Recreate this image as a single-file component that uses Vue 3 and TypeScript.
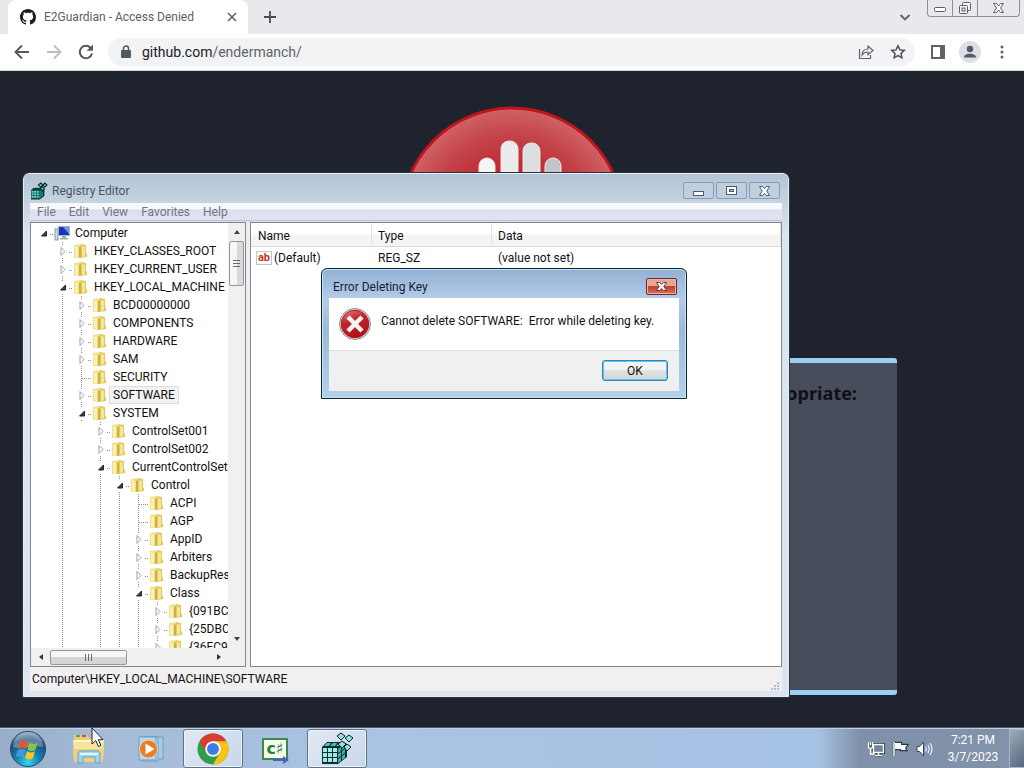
<script setup lang="ts">
import { ref } from 'vue'

interface TreeRow {
  name: string
  depth: number
  state: 'open' | 'closed' | 'leaf'
  selected?: boolean
}

const rows: TreeRow[] = [
  { name: 'Computer', depth: 0, state: 'open' },
  { name: 'HKEY_CLASSES_ROOT', depth: 1, state: 'closed' },
  { name: 'HKEY_CURRENT_USER', depth: 1, state: 'closed' },
  { name: 'HKEY_LOCAL_MACHINE', depth: 1, state: 'open' },
  { name: 'BCD00000000', depth: 2, state: 'closed' },
  { name: 'COMPONENTS', depth: 2, state: 'closed' },
  { name: 'HARDWARE', depth: 2, state: 'closed' },
  { name: 'SAM', depth: 2, state: 'closed' },
  { name: 'SECURITY', depth: 2, state: 'leaf' },
  { name: 'SOFTWARE', depth: 2, state: 'closed', selected: true },
  { name: 'SYSTEM', depth: 2, state: 'open' },
  { name: 'ControlSet001', depth: 3, state: 'closed' },
  { name: 'ControlSet002', depth: 3, state: 'closed' },
  { name: 'CurrentControlSet', depth: 3, state: 'open' },
  { name: 'Control', depth: 4, state: 'open' },
  { name: 'ACPI', depth: 5, state: 'leaf' },
  { name: 'AGP', depth: 5, state: 'leaf' },
  { name: 'AppID', depth: 5, state: 'closed' },
  { name: 'Arbiters', depth: 5, state: 'closed' },
  { name: 'BackupRestore', depth: 5, state: 'closed' },
  { name: 'Class', depth: 5, state: 'open' },
  { name: '{091BC97D', depth: 6, state: 'closed' },
  { name: '{25DBCE51', depth: 6, state: 'closed' },
  { name: '{36FC9E60', depth: 6, state: 'closed' },
]

// Levels whose vertical connector continues past their open child.
const continued = new Set([1, 3, 4, 5])

// Cells of the isometric cube in the Registry Editor icon: front face, then side face.
const front = [0, 1, 2].flatMap((r) => [0, 1, 2].map((c) => ({ x: 3 + c * 5, y: 17 + r * 5 })))
const side = [0, 1].flatMap((c) => [0, 1, 2].map((r) => `M${18 + c * 4} ${18 - c * 3 + r * 5}l3-2v4l-3 2z`))

const menus = ['File', 'Edit', 'View', 'Favorites', 'Help']
const address = ref('github.com/endermanch/')
</script>

<template>
  <div class="desktop">
    <header class="tabstrip">
      <div class="tab">
        <svg class="octo" viewBox="0 0 16 16" aria-hidden="true">
          <path fill="#1b1f23" d="M8 0C3.58 0 0 3.58 0 8c0 3.54 2.29 6.53 5.47 7.59.4.07.55-.17.55-.38 0-.19-.01-.82-.01-1.49-2.01.37-2.53-.49-2.69-.94-.09-.23-.48-.94-.82-1.13-.28-.15-.68-.52-.01-.53.63-.01 1.08.58 1.23.82.72 1.21 1.87.87 2.33.66.07-.52.28-.87.51-1.07-1.78-.2-3.64-.89-3.64-3.95 0-.87.31-1.59.82-2.15-.08-.2-.36-1.02.08-2.12 0 0 .67-.21 2.2.82.64-.18 1.32-.27 2-.27s1.36.09 2 .27c1.53-1.04 2.2-.82 2.2-.82.44 1.1.16 1.92.08 2.12.51.56.82 1.27.82 2.15 0 3.07-1.87 3.75-3.65 3.95.29.25.54.73.54 1.48 0 1.07-.01 1.93-.01 2.2 0 .21.15.46.55.38A8.01 8.01 0 0 0 16 8c0-4.42-3.58-8-8-8z" />
        </svg>
        <span class="tab-title">E2Guardian - Access Denied</span>
        <button class="plain" aria-label="Close tab">
          <svg width="16" height="16" viewBox="0 0 16 16"><path d="M4 4l8 8M12 4l-8 8" stroke="#5f6368" stroke-width="1.6" /></svg>
        </button>
      </div>
      <button class="plain new-tab" aria-label="New tab">
        <svg width="16" height="16" viewBox="0 0 16 16"><path d="M8 2v12M2 8h12" stroke="#4a4e53" stroke-width="1.8" /></svg>
      </button>
      <button class="plain tab-search" aria-label="Search tabs">
        <svg width="16" height="16" viewBox="0 0 16 16"><path d="M3.500 6l4.500 4.500L12.500 6" stroke="#5f6368" stroke-width="1.800" fill="none" /></svg>
      </button>
      <div class="caption">
        <button aria-label="Minimize"><svg width="14" height="10" viewBox="0 0 14 10"><rect x="1.500" y="4.500" width="11" height="4" rx="1" fill="#fff" stroke="#5b5f6b" /></svg></button>
        <button aria-label="Restore"><svg width="14" height="14" viewBox="0 0 14 14"><g fill="#f4f4f6" stroke="#5b5f6b"><rect x="4.500" y="1.500" width="8" height="8" rx="1" /><rect x="1.500" y="4.500" width="8" height="8" rx="1" /><rect x="4" y="7" width="3" height="3" /></g></svg></button>
        <button class="wide" aria-label="Close"><svg width="13" height="12" viewBox="0 0 13 12"><path d="M1.500 1.500h3l2 2.500 2-2.500h3L8.500 6l3 4.500h-3l-2-2.500-2 2.500h-3l3-4.500z" fill="#fff" stroke="#5b5f6b" /></svg></button>
      </div>
    </header>

    <nav class="toolbar">
      <button class="plain" aria-label="Back"><svg width="20" height="20" viewBox="0 0 20 20"><path d="M17 10H4M10 3.500L3.500 10l6.500 6.500" fill="none" stroke="#55595e" stroke-width="1.900" /></svg></button>
      <button class="plain" aria-label="Forward"><svg width="20" height="20" viewBox="0 0 20 20"><path d="M3 10h13M10 3.500l6.500 6.500-6.500 6.500" fill="none" stroke="#bbbec2" stroke-width="1.900" /></svg></button>
      <button class="plain" aria-label="Reload"><svg width="20" height="20" viewBox="0 0 20 20"><path d="M16 11.500A6.200 6.200 0 1 1 14.500 5.700L16 7.200" fill="none" stroke="#55595e" stroke-width="2" /><path d="M17 2.500v6.300h-6.300z" fill="#55595e" /></svg></button>
      <div class="omnibox">
        <svg width="12" height="14" viewBox="0 0 12 14" aria-hidden="true"><rect x="1" y="5" width="10" height="8" rx="1" fill="#55595e" /><path d="M3.500 6V3.500a2.500 2.500 0 0 1 5 0V6" fill="none" stroke="#55595e" stroke-width="1.500" /></svg>
        <div class="url">
          <input v-model="address" aria-label="Address" />
          <span class="url-view" aria-hidden="true"><b>github.com</b>/endermanch/</span>
        </div>
        <button class="plain" aria-label="Share"><svg width="18" height="18" viewBox="0 0 18 18"><path d="M2.500 6v9.500h11V12M5 12c.3-4 2.500-6 6-6V3l5 4.500-5 4.300V9c-2.700 0-4.500.8-6 3z" fill="none" stroke="#5f6368" stroke-width="1.200" /></svg></button>
        <button class="plain" aria-label="Bookmark"><svg width="16" height="16" viewBox="0 0 16 16"><path d="M8 1.800l1.900 4.100 4.400.5-3.300 3 .9 4.400L8 11.600l-3.900 2.200.9-4.400-3.300-3 4.400-.5z" fill="none" stroke="#4d5156" stroke-width="1.500" /></svg></button>
      </div>
      <button class="plain side" aria-label="Side panel"><svg width="16" height="16" viewBox="0 0 16 16"><rect x="2" y="2" width="12" height="12" fill="#fff" stroke="#5f6368" stroke-width="2" /><rect x="10" y="1" width="5" height="14" fill="#5f6368" /></svg></button>
      <button class="plain avatar" aria-label="Profile"><svg width="22" height="22" viewBox="0 0 22 22"><circle cx="11" cy="11" r="11" fill="#dcdfe4" /><circle cx="11" cy="8" r="3.200" fill="#505968" /><path d="M5 16.500c0-5 12-5 12 0z" fill="#505968" /></svg></button>
      <button class="plain dots" aria-label="Menu"><svg width="16" height="16" viewBox="0 0 16 16" fill="#5f6368"><circle cx="8" cy="3" r="1.500" /><circle cx="8" cy="8" r="1.500" /><circle cx="8" cy="13" r="1.500" /></svg></button>
    </nav>

    <main class="page">
      <svg class="stop" viewBox="0 0 226 226" aria-hidden="true">
        <defs>
          <radialGradient id="red" cx=".5" cy=".5" r=".5"><stop offset="0" stop-color="#b8202a" /><stop offset=".5" stop-color="#be2d36" /><stop offset=".75" stop-color="#c4434a" /><stop offset="1" stop-color="#cf6266" /></radialGradient>
        </defs>
        <circle cx="113" cy="113" r="111" fill="url(#red)" stroke="#bd141d" stroke-width="3" />
        <g stroke="#f4e4e2" stroke-width="1">
          <rect x="80" y="52" width="16" height="90" rx="8" fill="#f5f5f5" />
          <rect x="102" y="35" width="17" height="100" rx="8" fill="#ebebec" />
          <rect x="124" y="37" width="17" height="100" rx="8" fill="#dcdfe1" />
          <rect x="146" y="52" width="16" height="90" rx="8" fill="#c3c6c8" />
        </g>
      </svg>
      <section class="notice"><p>appropriate:</p></section>
    </main>

    <section class="window" aria-label="Registry Editor">
      <div class="titlebar">
        <svg width="18" height="18" viewBox="0 0 35 35" aria-hidden="true">
          <path d="M2 16l5-5h17l4 2v14l-9 7H2z" fill="#0d3a3a" />
          <path v-for="p in front" :key="`${p.x}-${p.y}`" :d="`M${p.x} ${p.y}h4v4h-4z`" fill="#5fd6cb" />
          <path v-for="p in side" :key="p" :d="p" fill="#2f9a93" />
          <path d="M16 6l5-4 4 4-4 4zM25 6l4-4 4 4-4 4zM20 13l4-4 4 4-4 4z" fill="#5fd6cb" stroke="#072222" stroke-width="2" />
        </svg>
        <h1>Registry Editor</h1>
        <div class="controls">
          <button aria-label="Minimize window"><svg width="12" height="12" viewBox="0 0 12 12"><rect x=".5" y="6.500" width="10" height="4" fill="#fff" stroke="#4c5a72" /></svg></button>
          <button aria-label="Maximize window"><svg width="12" height="12" viewBox="0 0 12 12"><rect x=".5" y="1.500" width="10" height="8" fill="#fff" stroke="#4c5a72" /><rect x="3.500" y="4.500" width="4" height="2" fill="#b7c6d8" stroke="#4c5a72" /></svg></button>
          <button aria-label="Close window"><svg width="13" height="12" viewBox="0 0 13 12"><path d="M1.500 1.500h3l2 2 2-2h3L8.800 6l2.700 4.500h-3l-2-2-2 2h-3L4.200 6z" fill="#fff" stroke="#4c5a72" /></svg></button>
        </div>
      </div>
      <div class="menubar"><button v-for="m in menus" :key="m">{{ m }}</button></div>

      <div class="panes">
        <div class="tree-pane">
          <ul class="tree" role="tree">
            <li v-for="row in rows" :key="row.name" role="treeitem" :aria-level="row.depth + 1" :aria-selected="!!row.selected">
              <i v-for="d in row.depth" :key="d" class="guide" :class="{ line: continued.has(d - 1) }"></i>
              <span class="twist" :class="[row.state, { root: row.depth === 0 }]">
                <button v-if="row.state !== 'leaf'" class="plain" :aria-label="'Toggle ' + row.name">
                  <svg width="10" height="10" viewBox="0 0 10 10">
                    <path v-if="row.state === 'open'" d="M7.500 3v5h-5z" fill="#3c3c3c" stroke="#262626" />
                    <path v-else d="M3 1.500l4 4-4 4z" fill="#fff" stroke="#a0a0a0" />
                  </svg>
                </button>
              </span>
              <svg v-if="row.depth === 0" class="node" viewBox="0 0 16 16" aria-hidden="true">
                <rect x="1" y="4" width="3" height="11" fill="#d7dee5" stroke="#8797a6" /><rect x="4.500" y="1.500" width="11" height="9" fill="#1636b4" stroke="#a6b4c2" /><path d="M9 2h6v7z" fill="#6b94e4" /><path d="M8 11h4v2h2v1.500H6V13h2z" fill="#9facba" />
              </svg>
              <svg v-else class="node" viewBox="0 0 16 16" aria-hidden="true">
                <path d="M1 2l7-1v14H1z" fill="#efe08a" /><path d="M8 1l5 1v8l1 1v3l-7 1z" fill="#e3c95c" /><path d="M2 3l3 1v10l-3 1z" fill="#f8f0b4" /><path d="M6 4l2-1v11l-2 1z" fill="#cdb046" /><path d="M9 3l3 1v9l-3 1z" fill="#f3e795" />
              </svg>
              <span class="name" :class="{ selected: row.selected }">{{ row.name }}</span>
            </li>
          </ul>
          <div class="vbar">
            <button class="plain" aria-label="Scroll up"><svg width="8" height="6" viewBox="0 0 8 6"><path d="M1 5l3-4 3 4z" fill="#444" /></svg></button>
            <div class="vthumb"><i></i></div>
            <button class="plain" aria-label="Scroll down"><svg width="8" height="6" viewBox="0 0 8 6"><path d="M1 1l3 4 3-4z" fill="#444" /></svg></button>
          </div>
          <div class="hbar">
            <button class="plain" aria-label="Scroll left"><svg width="6" height="8" viewBox="0 0 6 8"><path d="M5 1L1 4l4 3z" fill="#333" /></svg></button>
            <div class="hthumb"><i></i></div>
            <button class="plain" aria-label="Scroll right"><svg width="6" height="8" viewBox="0 0 6 8"><path d="M1 1l4 3-4 3z" fill="#333" /></svg></button>
          </div>
        </div>

        <div class="list-pane">
          <table>
            <thead><tr><th class="c1">Name</th><th class="c1">Type</th><th>Data</th></tr></thead>
            <tbody>
              <tr>
                <td><span class="value"><span class="ab" aria-hidden="true">ab</span>(Default)</span></td>
                <td>REG_SZ</td>
                <td>(value not set)</td>
              </tr>
            </tbody>
          </table>
        </div>
      </div>

      <footer class="status">
        <span>Computer\HKEY_LOCAL_MACHINE\SOFTWARE</span>
        <svg width="10" height="10" viewBox="0 0 10 10" fill="#b9bcc6" aria-hidden="true"><path d="M7 1h2v2H7zM4 4h2v2H4zM7 4h2v2H7zM1 7h2v2H1zM4 7h2v2H4zM7 7h2v2H7z" /></svg>
      </footer>
    </section>

    <section class="dialog" role="alertdialog" aria-labelledby="dlg-title" aria-describedby="dlg-text">
      <div class="dlg-head">
        <h2 id="dlg-title">Error Deleting Key</h2>
        <button class="dlg-close" aria-label="Close dialog"><svg width="13" height="11" viewBox="0 0 13 11"><path d="M1.500 1.500h3l2 2 2-2h3L8.800 5.500l2.700 4h-3l-2-2-2 2h-3l2.700-4z" fill="#fff" stroke="#6b3c42" /></svg></button>
      </div>
      <div class="dlg-body">
        <svg width="32" height="32" viewBox="0 0 32 32" aria-hidden="true">
          <defs><linearGradient id="err" x2=".4" y2="1"><stop offset="0" stop-color="#e0898b" /><stop offset=".45" stop-color="#c4252b" /><stop offset="1" stop-color="#b01218" /></linearGradient></defs>
          <circle cx="16" cy="16" r="15.500" fill="#e6e6e6" stroke="#8f8686" />
          <circle cx="16" cy="16" r="13.800" fill="url(#err)" stroke="#a8161c" />
          <path d="M9 9l14 14M23 9L9 23" stroke="#f6f3f3" stroke-width="4.500" />
        </svg>
        <p id="dlg-text">Cannot delete SOFTWARE:&nbsp; Error while deleting key.</p>
      </div>
      <div class="dlg-foot"><button class="ok">OK</button></div>
    </section>

    <footer class="taskbar">
      <button class="plain start" aria-label="Start">
        <svg width="38" height="38" viewBox="0 0 38 38">
          <defs>
            <radialGradient id="orb" cx=".5" cy=".9" r=".9"><stop offset="0" stop-color="#35d5f2" /><stop offset=".4" stop-color="#167fae" /><stop offset=".75" stop-color="#1e4b78" /><stop offset="1" stop-color="#8fa8bd" /></radialGradient>
          </defs>
          <circle cx="19" cy="19" r="17.500" fill="url(#orb)" stroke="#29486a" />
          <path d="M4 17a15 15 0 0 1 30 0c-9-3-20 3-30 0z" fill="#d5e2ec" opacity=".35" />
          <path d="M11 12c3-2 5-2 8 0l-2 7c-3-2-5-2-8 0z" fill="#e8552b" />
          <path d="M20.500 12.500c3 2 5 2 8 0l-2 7c-3 2-5 2-8 0z" fill="#8cc63e" />
          <path d="M8.500 20.500c3-2 5-2 8 0l-2 7c-3-2-5-2-8 0z" fill="#3f9be0" />
          <path d="M18 21c3 2 5 2 8 0l-2 7c-3 2-5 2-8 0z" fill="#fdc52b" />
        </svg>
      </button>
      <button class="task" aria-label="Windows Explorer">
        <svg width="36" height="34" viewBox="0 0 36 34">
          <path d="M3 6V3h13l2 3h13v4H3z" fill="#e6cd7c" /><path d="M5 3h4v2H5z" fill="#4fae48" /><path d="M11 3h4v2h-4z" fill="#cf4a38" /><path d="M2 8h31l-1 20H3z" fill="#f6e39c" /><path d="M3 8h29v2H3z" fill="#fff6cd" /><path d="M2 17h31l-1 13H3z" fill="#ecd07a" />
          <path d="M7 31V22c0-2 1-3 3-3h16c2 0 3 1 3 3v9h-5v-6H12v6z" fill="#9fd4ee" stroke="#5da6cd" /><path d="M9 22h18" stroke="#e3f6ff" stroke-width="2" />
        </svg>
      </button>
      <button class="task" aria-label="Media Player">
        <svg width="30" height="30" viewBox="0 0 30 30">
          <path d="M9 3h18v22H9z" fill="#a7cde6" stroke="#6f9fc2" /><path d="M5 3h17v24H5z" fill="#c6e2f2" stroke="#699cc2" /><path d="M3 3h17v23H3z" fill="#b5d6ec" stroke="#699cc2" /><circle cx="12.500" cy="15" r="9" fill="#ee7c20" stroke="#d5d5d5" /><path d="M9.500 9.500l9 5.500-9 5.500z" fill="#fff" />
        </svg>
      </button>
      <button class="task active" aria-label="Google Chrome">
        <svg width="32" height="32" viewBox="0 0 32 32">
          <circle cx="16" cy="16" r="15.500" fill="#2e9e4b" />
          <path d="M2.600 8.200A15.500 15.500 0 0 1 29.400 8.200H16L9.300 20z" fill="#dc3a2e" />
          <path d="M29.400 8.200A15.500 15.500 0 0 1 16 31.500l6.700-11.600L16 8.200z" fill="#fbc116" />
          <circle cx="16" cy="16" r="7.800" fill="#fff" /><circle cx="16" cy="16" r="6" fill="#3b7de8" />
        </svg>
      </button>
      <button class="task" aria-label="C# Editor">
        <span class="csharp"><span>c♯</span><svg width="18" height="8" viewBox="0 0 18 8"><path d="M1 3h10V0l6 4-6 4V5H1z" fill="#4b62c0" /></svg></span>
      </button>
      <button class="task active" aria-label="Registry Editor task">
        <svg width="35" height="35" viewBox="0 0 35 35">
          <path d="M2 16l5-5h17l3 2v13l-9 7H2z" fill="#0b2f30" />
          <path d="M7 12h4l-2 3H4zM13 12h4l-2 3h-5zM19 12h4l-3 3h-4z" fill="#5cb9b3" />
          <path v-for="p in front" :key="`${p.x}-${p.y}`" :d="`M${p.x} ${p.y}h4v4h-4z`" fill="#a3ece4" />
          <path v-for="p in side" :key="p" :d="p" fill="#43ada6" />
          <path d="M17 5l4-3 4 3-4 4zM25 7l4-3 4 3-4 4zM18 13l4-3 4 3-4 4zM24 16l3-3 4 3-4 4z" fill="#8de4da" stroke="#072222" />
        </svg>
      </button>
      <div class="tray">
        <svg width="18" height="18" viewBox="0 0 18 18" aria-label="Network"><path d="M6.500 4.500h10v8h-10zM8 15.500h7M11.500 13v2" fill="#62748c" stroke="#24303f" stroke-width="3" /><path d="M6.500 4.500h10v8h-10zM8 15.500h7M11.500 13v2M3.500 8v6h4" fill="#71849b" stroke="#fff" stroke-width="1.300" /><path d="M1.500 2v6h4V2M3.500 2v3" fill="#4d5c70" stroke="#fff" stroke-width="1.200" /></svg>
        <svg width="18" height="18" viewBox="0 0 18 18" aria-label="Action Center"><path d="M3 2v14M4 3h6v2h6l-2 3 1 2h-5V9H4z" stroke="#2b3848" stroke-width="2.500" fill="#fff" /><path d="M3 2v14" stroke="#fff" stroke-width="1.500" /><path d="M4 3h6v2h6l-2 3 1 2h-5V9H4z" fill="#fff" /></svg>
        <svg width="18" height="18" viewBox="0 0 18 18" aria-label="Volume"><path d="M2 6.500h2.500L8.500 2v14l-4-4.500H2z" fill="#fff" stroke="#344356" /><path d="M10.500 6.500q1.500 2.500 0 5M12.800 4.800q2.600 4.200 0 8.400M15 3q4 6 0 12" fill="none" stroke="#e8eef5" stroke-width="1.200" /></svg>
        <div class="clock"><time>7:21 PM</time><time>3/7/2023</time></div>
      </div>
      <button class="show-desktop" aria-label="Show desktop"></button>
    </footer>

    <svg class="cursor" width="14" height="21" viewBox="0 0 14 21" aria-hidden="true"><path d="M1 1v16l3.800-3.500 2.700 6 2.400-1.100-2.600-5.700H12z" fill="#fff" stroke="#222" /></svg>
  </div>
</template>

<style>
html, body { margin: 0; }
</style>

<style scoped>
* { box-sizing: border-box; }
.desktop {
  position: relative;
  display: flex;
  flex-direction: column;
  height: 100vh;
  overflow: hidden;
  background: #1f232d;
  color: #111;
  font: 12px/18px Roboto, "Open Sans", sans-serif;
}
button { font: inherit; color: inherit; padding: 0; margin: 0; }
svg { display: block; flex: none; }
.plain { display: flex; align-items: center; justify-content: center; border: 0; background: none; }

.tabstrip { display: flex; align-items: center; flex: none; height: 34px; padding-left: 8px; background: #e8e9ed; }
.tab { display: flex; align-items: center; width: 240px; height: 34px; padding: 0 8px 0 12px; border-radius: 8px 8px 0 0; background: #fff; }
.octo { width: 16px; height: 16px; margin-right: 8px; }
.tab-title { flex: 1; color: #5b5e63; white-space: nowrap; }
.new-tab { margin-left: 14px; }
.tab-search { margin-left: auto; }
.caption { display: flex; align-self: flex-start; height: 17px; margin: 0 4px 0 14px; border: 1px solid #8e9097; border-top: 0; border-radius: 0 0 4px 4px; }
.caption button { display: flex; align-items: center; justify-content: center; width: 25px; border: 0; border-right: 1px solid #8e9097; background: none; }
.caption .wide { width: 41px; border-right: 0; }

.toolbar { display: flex; align-items: center; flex: none; height: 37px; padding: 0 14px 0 12px; gap: 12px; border-bottom: 1px solid #d4d5d8; background: #fff; }
.omnibox { display: flex; align-items: center; flex: 1; height: 28px; padding: 0 9px 0 12px; gap: 15px; border-radius: 14px; background: #f1f3f4; }
.url { position: relative; flex: 1; height: 24px; margin-left: -5px; font-size: 14px; line-height: 24px; }
.url input { width: 100%; height: 24px; padding: 0; border: 0; outline: 0; background: none; color: transparent; font: inherit; }
.url-view { position: absolute; inset: 0; pointer-events: none; color: #5f6368; }
.url-view b { font-weight: 400; color: #202124; }
.side { margin-left: 3px; }
.avatar, .dots { margin-left: 1px; }

.page { display: flex; flex-direction: column; align-items: center; flex: 1; min-height: 0; padding-top: 35px; }
.stop { width: 226px; height: 226px; }
.notice { width: 770px; height: 337px; margin-top: 26px; padding: 19px 40px; border: solid #9fcdf3; border-width: 5px 0; border-radius: 3px; background: #484d5c; text-align: right; }
.notice p { margin: 0; color: #0e1017; font: 700 18px/22px "Open Sans", "Noto Sans", sans-serif; }

.window {
  position: absolute;
  left: 23px;
  right: 235px;
  top: 173px;
  bottom: 71px;
  display: flex;
  flex-direction: column;
  padding: 0 6px 5px;
  border: 1px solid #e6edf3;
  border-radius: 6px 6px 0 0;
  outline: 1px solid #30343e;
  background: linear-gradient(#b4c4d4, #d9e5ef 60px, #dce6f0);
}
.titlebar { display: flex; align-items: center; flex: none; height: 29px; padding-top: 4px; }
h1, h2 { margin: 0; font-size: 12px; font-weight: 400; }
h1 { flex: 1; margin-left: 4px; color: #4a5361; }
.controls { display: flex; gap: 2px; margin-right: 2px; }
.controls button { display: flex; align-items: center; justify-content: center; width: 31px; height: 17px; border: 1px solid #8a9db6; border-radius: 2px; background: #c0cfdf; }
.menubar { display: flex; flex: none; height: 18px; margin-bottom: 1px; padding-left: 7px; gap: 13px; border-bottom: 1px solid #c2c6d6; background: linear-gradient(#f8f9fc 35%, #dcdff0 40%, #e0e2f1); }
.menubar button { border: 0; background: none; color: #73767f; line-height: 18px; }
.panes { display: flex; flex: 1; min-height: 0; gap: 4px; background: #eceef2; }
.tree-pane { display: grid; grid-template: 1fr 18px / 1fr 17px; width: 216px; border: 1px solid #828790; background: #f0f0f0; }
.tree { min-height: 0; min-width: 0; margin: 0; padding: 1px 0 0 4px; overflow: hidden; list-style: none; background: #fff; }
.tree li { display: flex; align-items: center; height: 18px; white-space: nowrap; }
.guide, .twist { position: relative; flex: none; width: 19px; height: 18px; }
.line, .twist:not(.root) { background: repeating-linear-gradient(#8c8c8c 0 1px, transparent 1px 2px) 8px 0 / 1px 18px no-repeat; }
.twist button { width: 14px; height: 12px; margin: 3px 2px; background: #fff; }
.twist::after { position: absolute; left: 15px; top: 10px; width: 4px; height: 1px; background: repeating-linear-gradient(90deg, #8c8c8c 0 1px, transparent 1px 2px); content: ""; }
.twist.leaf::after { left: 9px; width: 10px; }
.node { width: 16px; height: 16px; }
.name { margin-left: 2px; padding: 0 3px; line-height: 16px; }
.selected { outline: 1px solid #dedede; background: #f2f2f2; }
.vbar { display: flex; flex-direction: column; align-items: center; background: #f0f0f0; }
.vbar .plain { width: 17px; height: 18px; }
.vbar .plain:last-child { margin-top: auto; }
.vthumb, .hthumb { display: flex; align-items: center; justify-content: center; border: 1px solid #979797; border-radius: 2px; }
.vthumb { width: 15px; height: 45px; background: linear-gradient(90deg, #f6f6f6 50%, #d9d9dc 50%); }
.vthumb i { width: 7px; height: 7px; background: repeating-linear-gradient(#6b6b6b 0 1px, transparent 1px 3px); }
.hbar { display: flex; align-items: center; background: #f0f0f0; }
.hbar .plain { width: 19px; height: 17px; }
.hbar .plain:last-child { margin-left: auto; }
.hthumb { width: 77px; height: 15px; background: linear-gradient(#f6f6f6 50%, #d5d5d8 50%); }
.hthumb i { width: 7px; height: 7px; background: repeating-linear-gradient(90deg, #6b6b6b 0 1px, transparent 1px 3px); }

.list-pane { flex: 1; min-width: 0; border: 1px solid #828790; background: #fff; }
table { width: 100%; border-collapse: separate; border-spacing: 0; table-layout: fixed; }
th { height: 24px; padding: 2px 0 0 6px; border-right: 1px solid #e2e3e5; border-bottom: 1px solid #d9dadd; background: linear-gradient(#fff 45%, #f5f4f2 55%); font-weight: 400; text-align: left; }
th.c1 { width: 120px; }
th:first-child { width: 121px; padding-left: 7px; }
td { height: 20px; padding: 1px 0 0 6px; }
td:first-child { padding-left: 5px; }
.value { display: flex; align-items: center; gap: 2px; }
.ab { width: 16px; height: 14px; border: 1px solid #c3c3c3; background: #fff; color: #c53424; font-size: 11px; font-weight: 700; line-height: 11px; text-align: center; }
.status { display: flex; align-items: center; justify-content: space-between; flex: none; height: 24px; padding: 0 2px; background: #f2eff1; }
.status svg { align-self: flex-end; }

.dialog {
  position: absolute;
  left: 321px;
  top: 268px;
  width: 366px;
  padding: 0 7px 7px;
  border: 1px solid #16202c;
  border-radius: 6px 6px 0 0;
  box-shadow: inset 0 0 0 1px #b5ecf7;
  background: linear-gradient(#92b0d4, #b4cce8 30px, #9fb9d8 60px, #b6cfe9);
}
.dlg-head { display: flex; align-items: center; justify-content: space-between; height: 29px; padding: 6px 2px 0 4px; }
.dlg-head h2 { color: #14243c; }
.dlg-close { display: flex; align-items: center; justify-content: center; width: 31px; height: 17px; border: 1px solid #6a2a2c; border-radius: 2px; background: linear-gradient(#e5a696 45%, #c23e2b 50%, #d6735a); box-shadow: inset 0 0 0 1px #edb8ab; }
.dlg-body { display: flex; height: 52px; padding: 10px 10px; gap: 10px; background: #fff; }
.dlg-body p { margin: 4px 0; white-space: nowrap; }
.dlg-foot { display: flex; justify-content: flex-end; height: 41px; padding: 9px 11px; border-top: 1px solid #dfdfdf; background: #f0f0f0; }
.ok { width: 66px; height: 21px; border: 1px solid #3c7fb1; border-radius: 3px; box-shadow: inset 0 0 0 1px #5bcbee; background: linear-gradient(#f3f3f3 45%, #dfe1e2 50%, #d2d4d6); line-height: 18px; }

.taskbar { position: relative; display: flex; flex: none; height: 40px; gap: 2px; border-top: 1px solid #c2d1e0; outline: 1px solid #46596f; background: linear-gradient(90deg, #98adc8, #a6bcd8 120px, #a9c3e3 380px, #a5c1e3 calc(100% - 205px), #7f91a9 calc(100% - 165px), #8192a9); }
.start { width: 55px; height: 39px; margin-right: 2px; }
.task { display: flex; align-items: center; justify-content: center; width: 60px; height: 39px; border: 1px solid transparent; border-radius: 3px; background: none; }
.task.active { border-color: #5c728e; box-shadow: inset 0 0 0 1px #edf3fa; background: linear-gradient(135deg, #e2e9f3, #c9d7e9); }
.csharp { position: relative; display: block; width: 26px; height: 22px; border: 2px solid #3d8a46; background: #f6faf3; color: #2f7d34; font: 700 16px/18px "DejaVu Sans", sans-serif; }
.csharp svg { position: absolute; right: -4px; bottom: -6px; }
.tray { display: flex; align-items: center; gap: 6px; margin-left: auto; color: #fff; }
.clock { display: flex; flex-direction: column; align-items: center; width: 68px; line-height: 17px; }
.show-desktop { width: 15px; height: 39px; border: 1px solid #a9b7c7; border-right: 0; background: linear-gradient(135deg, #9dabbc, #56677d); }
.cursor { position: absolute; left: 91px; top: 727px; }
</style>
